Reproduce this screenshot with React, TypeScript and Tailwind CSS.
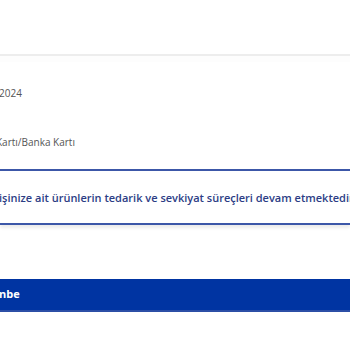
export default function App() {
  return (
    <div className="w-[350px] h-[350px] overflow-hidden bg-white font-['Open_Sans',sans-serif]">
      {/* header spacer */}
      <div className="h-[54px] bg-white" />
      <div className="h-[2px] bg-[#ededed]" />

      {/* order info rows */}
      <div className="bg-[#fdfdfd] h-[6px]" />
      <div className="pt-[24px] whitespace-nowrap">
        <p className="text-[10px] leading-[14px] text-[#555555] ml-[-1px]">2024</p>
      </div>
      <div className="pt-[35px] whitespace-nowrap">
        <p className="text-[10px] leading-[14px] text-[#555555] ml-[-4px]">
          Kartı/Banka Kartı
        </p>
      </div>

      {/* info box */}
      <div className="mt-[20px] border-y-2 border-[#3c57a8] h-[56px] flex items-center whitespace-nowrap shadow-[0_3px_3px_rgba(0,0,0,0.08)]">
        <p className="text-[11px] font-semibold text-[#2c3d85] ml-[-1px] mt-[2px]">
          işinize ait ürünlerin tedarik ve sevkiyat süreçleri devam etmektedir.
        </p>
      </div>

      {/* action bar */}
      <div className="mt-[54px] h-[33px] bg-[#0034a2] border-b-2 border-[#2c4fa6] flex items-center">
        <span className="text-[11px] font-bold text-white ml-[-1px]">nbe</span>
      </div>
    </div>
  );
}
